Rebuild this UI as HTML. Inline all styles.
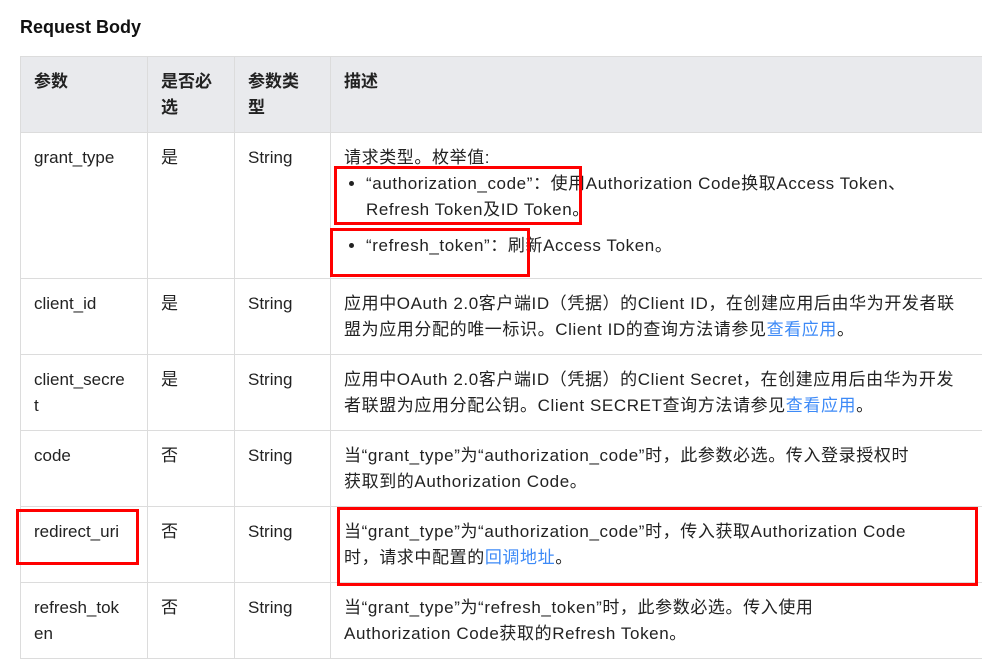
<!DOCTYPE html>
<html><head><meta charset="utf-8"><style>
body{margin:0;background:#fff;font-family:"Liberation Sans","Noto Sans CJK SC",sans-serif;color:#222;width:982px;height:670px;overflow:hidden;position:relative}
h3{position:absolute;left:20px;top:17px;margin:0;font-size:18px;font-weight:bold;color:#111}
table{position:absolute;left:20px;top:56px;border-collapse:collapse;width:980px;font-size:17px;line-height:26px;table-layout:fixed}
td,th{border:1px solid #dcdcdc;vertical-align:top;padding:12px 13px 11px;text-align:left;white-space:nowrap;overflow:hidden}
td:last-child{letter-spacing:0.6px}
th{background:#e9eaed;font-weight:bold;color:#222;height:52px}
a{color:#3d8af7;text-decoration:none}
ul{margin:0;padding-left:22px}
li{margin:0}
.r{position:absolute;border:3px solid #f00;box-sizing:border-box}
</style></head><body>
<h3>Request Body</h3>
<table>
<colgroup><col style="width:127px"><col style="width:87px"><col style="width:96px"><col></colgroup>
<tr><th>参数</th><th>是否必<br>选</th><th>参数类<br>型</th><th>描述</th></tr>
<tr style="height:146px"><td>grant_type</td><td>是</td><td>String</td><td>请求类型。枚举值:<ul><li>“authorization_code”：使用Authorization Code换取Access Token、<br>Refresh Token及ID Token。</li><li style="margin-top:10px">“refresh_token”：刷新Access Token。</li></ul></td></tr>
<tr><td>client_id</td><td>是</td><td>String</td><td>应用中OAuth 2.0客户端ID（凭据）的Client ID，在创建应用后由华为开发者联<br>盟为应用分配的唯一标识。Client ID的查询方法请参见<a>查看应用</a>。</td></tr>
<tr><td>client_secre<br>t</td><td>是</td><td>String</td><td>应用中OAuth 2.0客户端ID（凭据）的Client Secret，在创建应用后由华为开发<br>者联盟为应用分配公钥。Client SECRET查询方法请参见<a>查看应用</a>。</td></tr>
<tr><td>code</td><td>否</td><td>String</td><td>当“grant_type”为“authorization_code”时，此参数必选。传入登录授权时<br>获取到的Authorization Code。</td></tr>
<tr><td>redirect_uri</td><td>否</td><td>String</td><td>当“grant_type”为“authorization_code”时，传入获取Authorization Code<br>时，请求中配置的<a>回调地址</a>。</td></tr>
<tr><td>refresh_tok<br>en</td><td>否</td><td>String</td><td>当“grant_type”为“refresh_token”时，此参数必选。传入使用<br>Authorization Code获取的Refresh Token。</td></tr>
</table>
<div class="r" style="left:334px;top:166px;width:248px;height:59px"></div>
<div class="r" style="left:330px;top:228px;width:200px;height:49px"></div>
<div class="r" style="left:16px;top:509px;width:123px;height:56px"></div>
<div class="r" style="left:337px;top:507px;width:641px;height:79px"></div>
</body></html>
